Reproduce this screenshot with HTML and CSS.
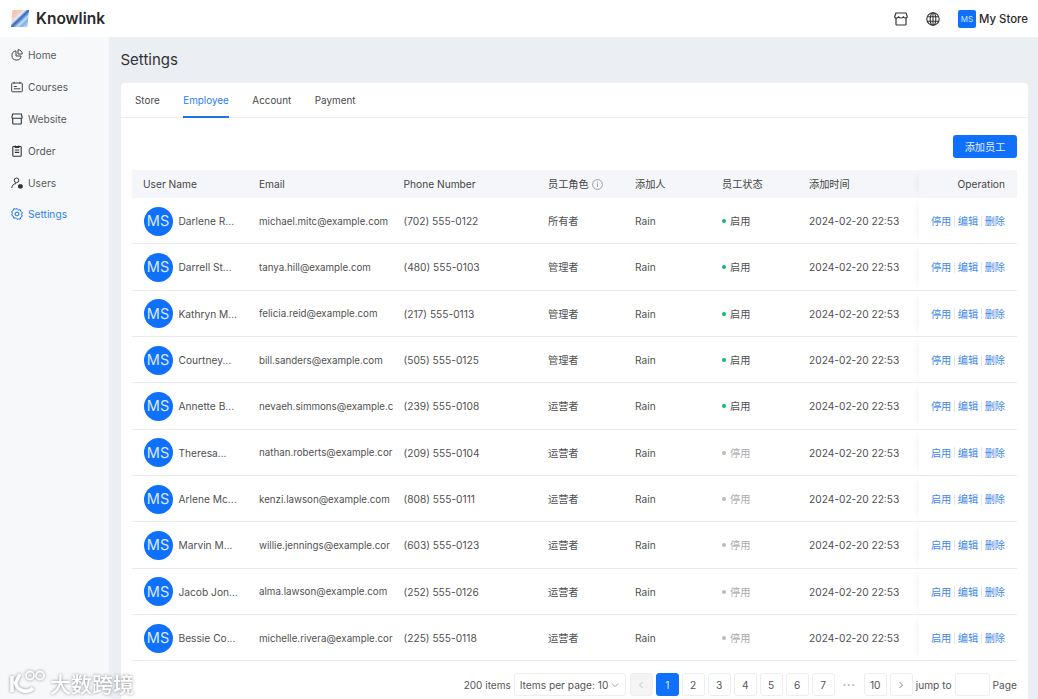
FILE: index.html
```html
<!DOCTYPE html>
<html lang="en">
<head>
<meta charset="utf-8">
<title>Knowlink Settings</title>
<link rel="stylesheet" href="styles.css">
</head>
<body>
<header class="topbar">
  <div class="brand">
    <svg class="brand-mark" width="18" height="17" viewBox="0 0 18 17">
      <defs>
        <linearGradient id="lg" x1="0" y1="0" x2="1" y2="1">
          <stop offset="0" stop-color="#f4bda9"/>
          <stop offset=".3" stop-color="#f3cdbf"/>
          <stop offset=".4" stop-color="#e8e9f2"/>
          <stop offset=".5" stop-color="#2f62bd"/>
          <stop offset=".58" stop-color="#6f9fdc"/>
          <stop offset=".66" stop-color="#c8def4"/>
          <stop offset=".76" stop-color="#7fb0e6"/>
          <stop offset="1" stop-color="#dbe8f5"/>
        </linearGradient>
      </defs>
      <path d="M1.500 0H18L16.500 17H0z" fill="url(#lg)"/>
    </svg>
    <span class="brand-name">Knowlink</span>
  </div>
  <div class="top-actions">
    <svg class="top-icon" width="14" height="14" viewBox="0 0 14 14" fill="none" stroke="#333" stroke-width="1.200"><path d="M2 1h10l1.300 3.600c0 1-.8 1.400-1.500 1.400-1 0-1.800-.5-2.400-1.100C8.800 5.500 8 6 7 6s-1.800-.5-2.400-1.100C4 5.500 3.200 6 2.200 6 1.500 6 .7 5.600.7 4.600z"/><path d="M2 6v6.200c0 .5.300.8.800.8h8.400c.5 0 .8-.3.800-.8V6"/></svg>
    <svg class="top-icon globe" width="14" height="14" viewBox="0 0 14 14" fill="none" stroke="#333" stroke-width="1.100"><circle cx="7" cy="7" r="6.200"/><ellipse cx="7" cy="7" rx="2.800" ry="6.200"/><path d="M1.200 4.800h11.600M1.200 9.200h11.600M7 .8v12.400"/></svg>
    <span class="store-badge">MS</span>
    <span class="store-name">My Store</span>
  </div>
</header>
<div class="shell">
  <nav class="sidebar">
    <a class="nav-item"><svg width="12" height="12" viewBox="0 0 12 12" fill="none" stroke="#444" stroke-width="1"><path d="M5 1.900a4.600 4.600 0 1 0 5.100 5.100H5z"/><path d="M7 .7a4.300 4.300 0 0 1 4.300 4.300H7z"/></svg>Home</a>
    <a class="nav-item"><svg width="12" height="12" viewBox="0 0 12 12" fill="none" stroke="#444" stroke-width="1"><rect x=".7" y="2" width="10.600" height="8.800" rx=".8"/><path d="M3 .8v2M9 .8v2M2.800 5.500h3M2.800 7.800h6.400"/></svg>Courses</a>
    <a class="nav-item"><svg width="12" height="12" viewBox="0 0 12 12" fill="none" stroke="#333" stroke-width="1.100"><path d="M1.700 1h8.600l.9 3.200c0 .8-.6 1.100-1.100 1.100H2c-.5 0-1.100-.3-1.100-1.100z"/><path d="M1.700 5.300v5c0 .4.300.7.700.7h7.200c.4 0 .7-.3.700-.7v-5"/></svg>Website</a>
    <a class="nav-item"><svg width="12" height="12" viewBox="0 0 12 12" fill="none" stroke="#333" stroke-width="1.100"><rect x="1.800" y="1.500" width="8.400" height="9.800" rx=".8"/><path d="M4.200.6v1.800h3.600V.6M3.800 5h4.400M3.800 7.400h4.400"/></svg>Order</a>
    <a class="nav-item"><svg width="12" height="12" viewBox="0 0 12 12" fill="none" stroke="#333" stroke-width="1"><circle cx="5.500" cy="3.300" r="2.300"/><path d="M.8 11c.2-2.800 2-4.400 4.400-4.400"/><rect x="7.600" y="7.800" width="3.600" height="3.200" rx=".5" fill="#333"/></svg>Users</a>
    <a class="nav-item nav-active"><svg width="12" height="12" viewBox="0 0 12 12" fill="none" stroke="#0f70fb" stroke-width="1"><path d="M6 .7l1.400 1.300 1.900-.2.500 1.800 1.600 1.100-.8 1.800.8 1.700-1.600 1-.5 1.900-1.900-.2L6 11.300l-1.400-1.400-1.900.2-.5-1.900-1.600-1 .8-1.700-.8-1.800 1.600-1.100.5-1.800 1.900.2z"/><circle cx="6" cy="6" r="1.900"/></svg>Settings</a>
  </nav>
  <main class="content">
    <h1 class="page-title">Settings</h1>
    <section class="card">
      <div class="tabs">
        <a class="tab">Store</a>
        <a class="tab tab-active">Employee</a>
        <a class="tab">Account</a>
        <a class="tab">Payment</a>
      </div>
      <div class="toolbar"><button class="add-btn">添加员工</button></div>
      <div class="table">
        <div class="row head">
          <div class="cell">User Name</div><div class="cell">Email</div><div class="cell">Phone Number</div>
          <div class="cell">员工角色<svg class="info" width="11" height="11" viewBox="0 0 11 11" fill="none" stroke="#888" stroke-width=".8"><circle cx="5.500" cy="5.500" r="4.900"/><path d="M5.500 4.500v3.500M5.500 2.700v1"/></svg></div>
          <div class="cell">添加人</div><div class="cell">员工状态</div><div class="cell">添加时间</div>
          <div class="cell op op-head">Operation</div>
        </div>
        <div class="row"><div class="cell user"><span class="avatar">MS</span><span class="uname">Darlene R...</span></div><div class="cell mail">michael.mitc@example.com</div><div class="cell">(702) 555-0122</div><div class="cell">所有者</div><div class="cell">Rain</div><div class="cell"><i class="dot on"></i>启用</div><div class="cell">2024-02-20 22:53</div><div class="cell op"><a>停用</a><a>编辑</a><a>删除</a></div></div>
        <div class="row"><div class="cell user"><span class="avatar">MS</span><span class="uname">Darrell St...</span></div><div class="cell mail">tanya.hill@example.com</div><div class="cell">(480) 555-0103</div><div class="cell">管理者</div><div class="cell">Rain</div><div class="cell"><i class="dot on"></i>启用</div><div class="cell">2024-02-20 22:53</div><div class="cell op"><a>停用</a><a>编辑</a><a>删除</a></div></div>
        <div class="row"><div class="cell user"><span class="avatar">MS</span><span class="uname">Kathryn M...</span></div><div class="cell mail">felicia.reid@example.com</div><div class="cell">(217) 555-0113</div><div class="cell">管理者</div><div class="cell">Rain</div><div class="cell"><i class="dot on"></i>启用</div><div class="cell">2024-02-20 22:53</div><div class="cell op"><a>停用</a><a>编辑</a><a>删除</a></div></div>
        <div class="row"><div class="cell user"><span class="avatar">MS</span><span class="uname">Courtney...</span></div><div class="cell mail">bill.sanders@example.com</div><div class="cell">(505) 555-0125</div><div class="cell">管理者</div><div class="cell">Rain</div><div class="cell"><i class="dot on"></i>启用</div><div class="cell">2024-02-20 22:53</div><div class="cell op"><a>停用</a><a>编辑</a><a>删除</a></div></div>
        <div class="row"><div class="cell user"><span class="avatar">MS</span><span class="uname">Annette B...</span></div><div class="cell mail">nevaeh.simmons@example.c</div><div class="cell">(239) 555-0108</div><div class="cell">运营者</div><div class="cell">Rain</div><div class="cell"><i class="dot on"></i>启用</div><div class="cell">2024-02-20 22:53</div><div class="cell op"><a>停用</a><a>编辑</a><a>删除</a></div></div>
        <div class="row"><div class="cell user"><span class="avatar">MS</span><span class="uname">Theresa...</span></div><div class="cell mail">nathan.roberts@example.cor</div><div class="cell">(209) 555-0104</div><div class="cell">运营者</div><div class="cell">Rain</div><div class="cell off-text"><i class="dot off"></i>停用</div><div class="cell">2024-02-20 22:53</div><div class="cell op"><a>启用</a><a>编辑</a><a>删除</a></div></div>
        <div class="row"><div class="cell user"><span class="avatar">MS</span><span class="uname">Arlene Mc...</span></div><div class="cell mail">kenzi.lawson@example.com</div><div class="cell">(808) 555-0111</div><div class="cell">运营者</div><div class="cell">Rain</div><div class="cell off-text"><i class="dot off"></i>停用</div><div class="cell">2024-02-20 22:53</div><div class="cell op"><a>启用</a><a>编辑</a><a>删除</a></div></div>
        <div class="row"><div class="cell user"><span class="avatar">MS</span><span class="uname">Marvin M...</span></div><div class="cell mail">willie.jennings@example.cor</div><div class="cell">(603) 555-0123</div><div class="cell">运营者</div><div class="cell">Rain</div><div class="cell off-text"><i class="dot off"></i>停用</div><div class="cell">2024-02-20 22:53</div><div class="cell op"><a>启用</a><a>编辑</a><a>删除</a></div></div>
        <div class="row"><div class="cell user"><span class="avatar">MS</span><span class="uname">Jacob Jon...</span></div><div class="cell mail">alma.lawson@example.com</div><div class="cell">(252) 555-0126</div><div class="cell">运营者</div><div class="cell">Rain</div><div class="cell off-text"><i class="dot off"></i>停用</div><div class="cell">2024-02-20 22:53</div><div class="cell op"><a>启用</a><a>编辑</a><a>删除</a></div></div>
        <div class="row"><div class="cell user"><span class="avatar">MS</span><span class="uname">Bessie Co...</span></div><div class="cell mail">michelle.rivera@example.cor</div><div class="cell">(225) 555-0118</div><div class="cell">运营者</div><div class="cell">Rain</div><div class="cell off-text"><i class="dot off"></i>停用</div><div class="cell">2024-02-20 22:53</div><div class="cell op"><a>启用</a><a>编辑</a><a>删除</a></div></div>
      </div>
      <div class="pager">
        <span class="total">200 items</span>
        <span class="size-select">Items per page: 10<svg width="8" height="8" viewBox="0 0 8 8" fill="none" stroke="#999" stroke-width=".9"><path d="M.8 2.500 4 5.700l3.200-3.200"/></svg></span>
        <span class="pg pg-disabled"><svg width="8" height="8" viewBox="0 0 8 8" fill="none" stroke="#bbb" stroke-width=".9"><path d="M5.500 1 2.500 4l3 3"/></svg></span>
        <span class="pg pg-active">1</span><span class="pg">2</span><span class="pg">3</span><span class="pg">4</span><span class="pg">5</span><span class="pg">6</span><span class="pg">7</span>
        <span class="pg pg-more">•••</span>
        <span class="pg">10</span>
        <span class="pg"><svg width="8" height="8" viewBox="0 0 8 8" fill="none" stroke="#777" stroke-width=".9"><path d="M2.500 1l3 3-3 3"/></svg></span>
        <span class="jump">jump to</span><span class="jump-input"></span><span class="jump-page">Page</span>
      </div>
    </section>
  </main>
</div>
<div class="watermark">
  <svg width="38" height="27" viewBox="0 0 38 27" fill="none" stroke="#fff" stroke-width="3.500"><path d="M3 7v16M11 5L6.500 14c2 8 12 11 17.500 5"/><circle cx="21" cy="6.500" r="4" stroke-width="1.800"/><circle cx="31" cy="6.500" r="4" stroke-width="1.800"/></svg>
  <span>大数跨境</span>
</div>
</body>
</html>
```
FILE: styles.css
```css
* { box-sizing: border-box; }
html, body { margin: 0; height: 100%; }
body {
  width: 1038px; height: 699px; overflow: hidden; position: relative;
  font-family: "Inter", "Noto Sans CJK SC", sans-serif;
  font-size: 10.2px; color: #505050; background: #ebeef3;
  display: flex; flex-direction: column;
}
.topbar {
  height: 37px; flex: none; background: #fff; display: flex;
  align-items: center; justify-content: space-between; padding: 0 10px 0 11px;
}
.brand { display: flex; align-items: center; gap: 7px; }
.brand-mark { margin-top: -1px; }
.brand-name { font-size: 15.500px; font-weight: 600; color: #2a2a2a; }
.top-actions { display: flex; align-items: center; }
.top-icon { display: block; margin-right: 18px; }
.globe { margin-right: 18px; }
.store-badge {
  width: 18px; height: 18px; border-radius: 2px; background: #0f70fb; color: #cfe2ff;
  font-size: 8px; display: flex; align-items: center; justify-content: center;
}
.store-name { margin-left: 3px; font-size: 11.400px; font-weight: 500; color: #2a2a2a; }
.shell { flex: 1; display: flex; min-height: 0; }
.sidebar { width: 109px; flex: none; background: #f7f8fa; padding-top: 2px; }
.nav-item { display: flex; align-items: center; gap: 5px; height: 31.900px; padding-left: 11px; color: #5a5a5a; }
.nav-item svg { flex: none; }
.nav-active { color: #2b80f5; }
.content { flex: 1; padding: 0 10px 0 12px; min-width: 0; }
.page-title { margin: 0 0 0 -.5px; height: 46px; line-height: 45px; font-size: 15px; font-weight: 400; color: #333; }
.card { background: #fff; border-radius: 4px 4px 0 0; height: 616px; padding: 0 11px; }
.tabs { display: flex; height: 35px; margin: 0 -11px; padding-left: 14px; gap: 23.500px; border-bottom: 1px solid #eceef1; font-size: 9.900px; }
.tab { height: 35px; line-height: 35px; color: #4a4a4a; }
.tab-active { color: #2b80f5; border-bottom: 2px solid #1f74e8; }
.toolbar { height: 52px; display: flex; justify-content: flex-end; align-items: flex-start; padding-top: 17px; }
.add-btn {
  width: 64px; height: 23px; border: 0; border-radius: 3px; background: #0f70fb; color: #e4efff;
  font: inherit; padding: 0; display: block;
}
.table { width: 885px; }
.row {
  display: grid; grid-template-columns: 116px 144.500px 144.500px 87px 87px 87px 121px 98px;
  height: 46.330px; border-bottom: 1px solid #e9ebee;
}
.row:not(.head) .cell { padding-top: 1px; }
.row:not(.head) .mail { padding-top: 2px; }
.head { height: 28px; background: #f5f6f9; border-bottom: 0; color: #444; }
.cell { display: flex; align-items: center; padding-left: 11px; min-width: 0; white-space: nowrap; overflow: hidden; line-height: 14px; }
.user { padding-left: 11.500px; }
.avatar {
  width: 29px; height: 29px; border-radius: 50%; background: #0f70fb; color: #dbe9ff;
  font-size: 14.500px; display: flex; align-items: center; justify-content: center; flex: none;
}
.uname { margin-left: 6px; }
.mail { font-size: 9.750px; }
.info { margin-left: 3px; }
.dot { width: 4px; height: 4px; border-radius: 50%; margin-right: 4px; flex: none; }
.on { background: #12b76a; }
.off { background: #bbb; }
.off-text { color: #aaa; }
.row .op {
  justify-content: flex-end; padding: 0 12px 0 0; background: #fff; overflow: visible;
  box-shadow: -6px 0 8px -6px rgba(30,40,70,.09);
}
.row .op-head { background: #f5f6f9; color: #444; }
.op a { color: #3f88ea; }
.op a + a { margin-left: 3px; padding-left: 3.500px; background: linear-gradient(#e4e7ec,#e4e7ec) left center / 1px 11px no-repeat; }
.pager { display: flex; align-items: center; justify-content: flex-end; margin-top: 12px; height: 23px; width: 885px; gap: 3px; color: #555; }
.total { font-size: 10px; }
.size-select {
  width: 112px; height: 23px; border: 1px solid #eceef1; border-radius: 3px; display: flex; white-space: nowrap;
  align-items: center; justify-content: space-between; padding: 0 6px 0 5px; margin-right: 1px;
}
.pg {
  width: 23px; height: 23px; border: 1px solid #eceef1; border-radius: 3px; display: flex;
  align-items: center; justify-content: center; flex: none; background: #fff;
}
.pg-disabled { background: #f4f4f5; }
.pg-active { background: #0f70fb; border-color: #0f70fb; color: #dbe9ff; }
.pg-more { border: 0; color: #aaa; font-size: 6px; letter-spacing: 1px; }
.jump-input { width: 35px; height: 23px; border: 1px solid #eceef1; border-radius: 3px; }
.watermark {
  position: absolute; left: 9px; bottom: 3px; height: 27px; display: flex; align-items: center; gap: 3px;
  color: #fff; font-size: 21px; font-weight: 500;
  filter: drop-shadow(0 0 1.500px rgba(0,0,0,.45));
  pointer-events: none;
}
```
